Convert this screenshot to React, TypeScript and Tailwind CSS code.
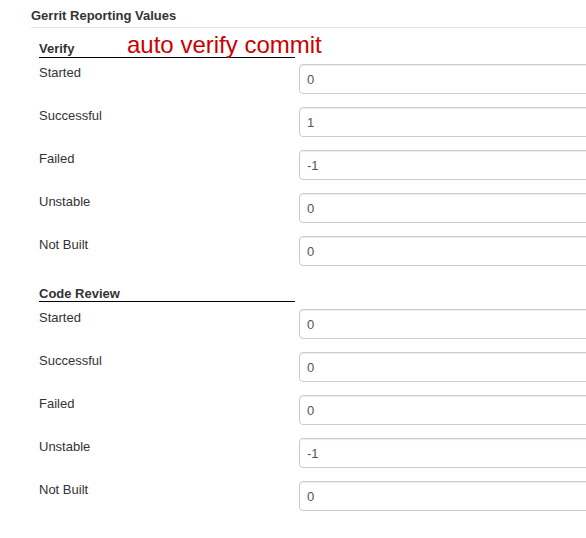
import React from "react";

type Row = { label: string; value: string };

const verify: Row[] = [
  { label: "Started", value: "0" },
  { label: "Successful", value: "1" },
  { label: "Failed", value: "-1" },
  { label: "Unstable", value: "0" },
  { label: "Not Built", value: "0" },
];

const codeReview: Row[] = [
  { label: "Started", value: "0" },
  { label: "Successful", value: "0" },
  { label: "Failed", value: "0" },
  { label: "Unstable", value: "-1" },
  { label: "Not Built", value: "0" },
];

function Section({
  title,
  rows,
  headMt,
  rowsMt,
  headLeading,
  note,
}: {
  title: string;
  rows: Row[];
  headMt: string;
  rowsMt: string;
  headLeading: string;
  note?: boolean;
}) {
  return (
    <div className={`relative ml-[39px] ${headMt}`}>
      <div
        className={`box-border h-[18px] w-[256px] border-b border-black text-[13px] font-bold text-[#333] ${headLeading}`}
      >
        {title}
      </div>
      {note && (
        <div className="absolute left-[88px] top-[-7px] whitespace-nowrap text-[24px] leading-[24px] text-[#cc0000]">
          auto verify commit
        </div>
      )}
      <div className={`flex flex-col gap-[13px] ${rowsMt}`}>
        {rows.map((r, i) => (
          <div key={i} className="flex h-[30px] items-start">
            <div className="w-[260px] shrink-0 text-[13px] leading-[18.57px] text-[#333]">
              {r.label}
            </div>
            <input
              readOnly
              value={r.value}
              className="box-border h-[30px] w-[320px] shrink-0 rounded-[4px] border border-[#ccc] bg-white px-[7px] text-[13px] text-[#555] shadow-[inset_0_1px_1px_rgba(0,0,0,0.075)] outline-none"
              style={{ fontFamily: '"Liberation Sans", Arial, sans-serif' }}
            />
          </div>
        ))}
      </div>
    </div>
  );
}

export default function App() {
  return (
    <div
      className="h-[538px] w-[586px] overflow-hidden bg-white"
      style={{ fontFamily: '"Liberation Sans", Arial, sans-serif' }}
    >
      <div className="ml-[31px] box-border h-[28px] border-b border-[#e5e5e5] pt-[7px] text-[13px] font-bold leading-[18.57px] text-[#333]">
        Gerrit Reporting Values
      </div>
      <Section
        title="Verify"
        rows={verify}
        headMt="mt-[12px]"
        rowsMt="mt-[6px]"
        headLeading="leading-[17px]"
        note
      />
      <Section
        title="Code Review"
        rows={codeReview}
        headMt="mt-[18px]"
        rowsMt="mt-[7px]"
        headLeading="leading-[19px]"
      />
    </div>
  );
}
